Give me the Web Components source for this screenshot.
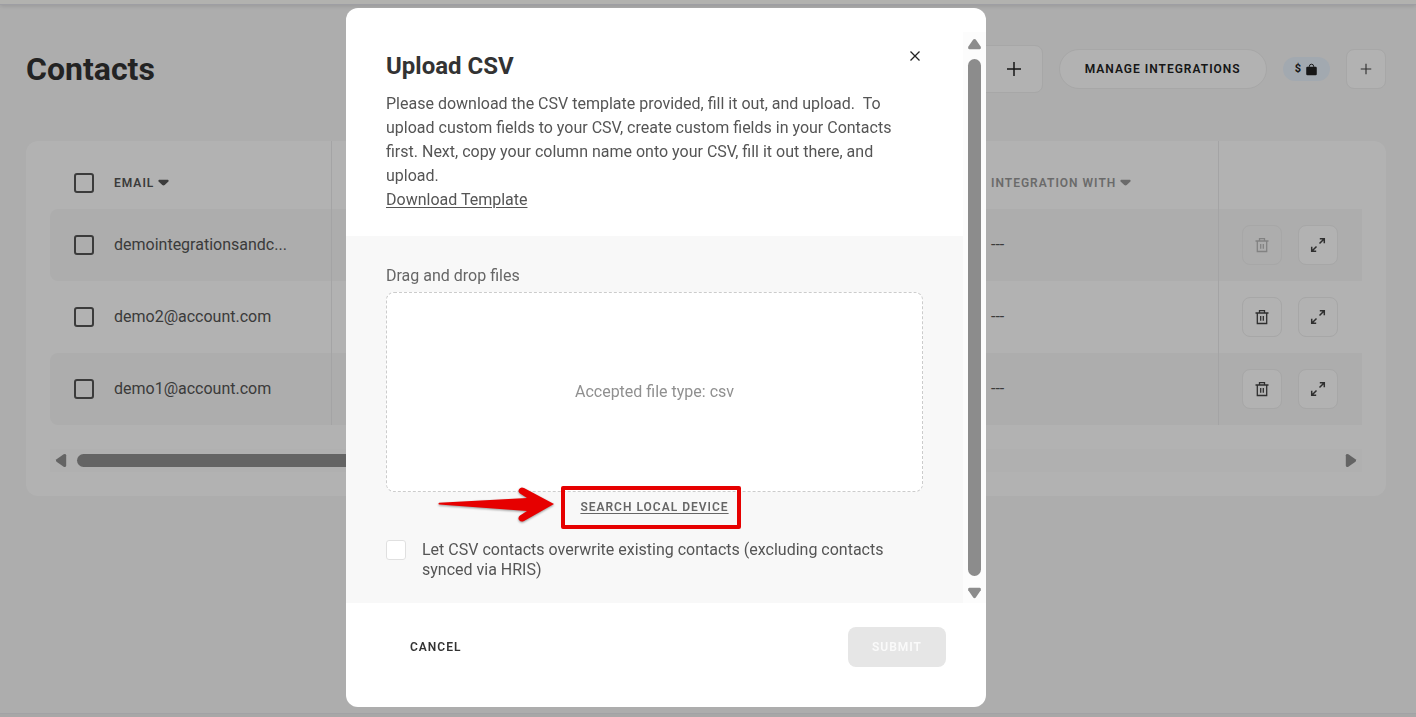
<!DOCTYPE html>
<html lang="en">
<head>
<meta charset="utf-8">
<title>Contacts</title>
<style>
html, body { margin: 0; height: 100%; }
body { background: #f8f8f8; color: #555; font: 16px/24px Roboto, "Liberation Sans", sans-serif; }
</style>
</head>
<body>
<contacts-page>
  <page-header slot="header" heading="Contacts"></page-header>
  <contacts-table></contacts-table>
</contacts-page>
<upload-dialog></upload-dialog>

<script>
const define = (name, markup) => {
  customElements.define(name, class extends HTMLElement {
    constructor() {
      super();
      this.attachShadow({ mode: 'open' });
    }
    connectedCallback() {
      this.shadowRoot.innerHTML = markup(this);
    }
  });
};

const icons = {
  plus: '<path d="M8 1v14M1 8h14" fill="none" stroke="currentColor" stroke-width="1.5"/>',
  close: '<path d="M3.5 3.5l9 9M12.5 3.5l-9 9" fill="none" stroke="currentColor" stroke-width="1.3"/>',
  trash: '<path d="M1.5 4h13M5.5 4V1.700h5V4M3.300 4v10.500h9.400V4M6.700 7v4.700M9.300 7v4.700" fill="none" stroke="currentColor" stroke-width="1.300"/>',
  expand: '<path d="M9.500 6.500L14 2M9.800 1.700h4.500v4.500M6.500 9.500L2 14M1.700 9.800v4.500h4.500" fill="none" stroke="currentColor" stroke-width="1.500"/>',
  bag: '<path d="M5.300 6V4.200a2.700 2.700 0 0 1 5.400 0V6" fill="none" stroke="currentColor" stroke-width="1.200"/><rect x="1.500" y="4.500" width="13" height="10.500" rx="1.500" fill="currentColor"/>',
  caret: '<path d="M2.500 4.500h11q1.500 1 .5 2.200L9.500 11q-1.500 1.200-3 0L2 6.700q-1-1.200.5-2.200z" fill="currentColor"/>',
  up: '<path d="M6.600 2.700Q8 1.300 9.400 2.700L14.700 10.300Q15.500 12.800 13.500 13H2.500Q.5 12.800 1.300 10.300z" fill="currentColor"/>'
};

define('ui-icon', el => `
  <style>
    :host { display: inline-flex; width: var(--icon-size, 16px); height: var(--icon-size, 16px); flex: none; }
    svg { width: 100%; height: 100%; display: block; }
  </style>
  <svg viewBox="0 0 16 16" aria-hidden="true">${icons[el.getAttribute('name')]}</svg>`);

define('icon-button', el => `
  <style>
    :host { display: inline-flex; }
    button { width: 40px; height: 40px; padding: 0; border: 1px solid #efefef; border-radius: 8px;
      background: #fff; color: #444; display: flex; align-items: center; justify-content: center; }
    button:disabled { background: transparent; color: #bbb; }
  </style>
  <button type="button" aria-label="${el.getAttribute('label')}" ${el.hasAttribute('disabled') ? 'disabled' : ''}>
    <ui-icon name="${el.getAttribute('icon')}"></ui-icon>
  </button>`);

define('contacts-page', () => `
  <style>
    :host { display: flex; flex-direction: column; min-height: 100vh; }
    .top { height: 4px; background: #fffffb; border-bottom: 1px solid #e2e2ea; box-shadow: 0 1px 4px #0002; }
    main { flex: 1; padding: 40px 30px 0 26px; }
    .bottom { height: 3px; background: #f0f0f0; border-top: 1px solid #e9e9ec; }
  </style>
  <div class="top"></div>
  <main><slot name="header"></slot><slot></slot></main>
  <div class="bottom"></div>`);

define('page-header', el => `
  <style>
    :host { display: flex; align-items: center; gap: 16px; height: 48px; margin-bottom: 48px; }
    h1 { flex: 1; margin: 0; color: #333; font-size: 32px; line-height: 40px; font-weight: 700; }
    .add { width: 280px; height: 48px; padding: 0 20px; border: 1px solid #efefef; border-radius: 8px; background: #fff;
      color: #222; display: flex; align-items: center; justify-content: flex-end; }
    .manage { height: 40px; padding: 0 25px; border: 1px solid #efefef; border-radius: 20px; background: #fff;
      color: #222; font: 600 12px/16px Roboto, "Liberation Sans", sans-serif; letter-spacing: 1px; }
    .pill { display: flex; align-items: center; gap: 4px; height: 24px; padding: 0 12px; border-radius: 12px; background: #e9f2fc;
      color: #222; font-size: 11px; line-height: 24px; font-weight: 700; }
    .pill ui-icon { --icon-size: 13px; }
  </style>
  <h1>${el.getAttribute('heading')}</h1>
  <button class="add" type="button" aria-label="Add filter"><ui-icon name="plus"></ui-icon></button>
  <button class="manage" type="button">MANAGE INTEGRATIONS</button>
  <span class="pill">$<ui-icon name="bag"></ui-icon></span>
  <icon-button icon="plus" label="Add contact" style="--icon-size:12px"></icon-button>`);

define('contacts-table', () => {
  const rows = ['demointegrationsandc...', 'demo2@account.com', 'demo1@account.com'];
  return `
  <style>
    :host { display: block; padding: 0 24px 24px; border-radius: 12px; background: #fff; }
    table { width: 100%; table-layout: fixed; border-collapse: separate; border-spacing: 0; }
    th, td { padding: 0 24px; text-align: left; box-sizing: border-box; }
    th { height: 68px; padding-top: 15px; font-size: 12px; line-height: 16px; font-weight: 600; letter-spacing: 1px; }
    td { height: 72px; }
    .email { width: 282px; border-right: 1px solid #ebebed; }
    .integration { width: 251px; }
    th.integration { color: #999; }
    .actions { width: 144px; padding: 0 23px; border-left: 1px solid #ebebed; }
    tbody tr:nth-child(odd) td { background: #f8f8f8; }
    tbody td:first-child { border-radius: 8px 0 0 8px; }
    .line { display: flex; align-items: center; gap: 20px; }
    .sort { display: inline-flex; align-items: center; gap: 3px; }
    .sort ui-icon { --icon-size: 13px; }
    .buttons { display: flex; gap: 16px; }
    input { appearance: none; flex: none; box-sizing: border-box; width: 20px; height: 20px; margin: 0; border: 2px solid #555; border-radius: 3px; }
    .scroll { display: flex; align-items: center; justify-content: space-between; height: 23px; margin-top: 24px; padding: 0 4px; background: #fcfcfc; color: #909090; }
    .scroll ui-icon { --icon-size: 15px; transform: rotate(-90deg); }
    .scroll ui-icon:last-child { transform: rotate(90deg); }
    .track { flex: 1; padding: 0 8px; }
    .thumb { width: 60%; height: 13px; border-radius: 7px; background: #909090; }
  </style>
  <table>
    <thead><tr>
      <th class="email"><span class="line"><input type="checkbox" aria-label="Select all contacts"><span class="sort">EMAIL<ui-icon name="caret"></ui-icon></span></span></th>
      <th></th>
      <th class="integration"><span class="sort">INTEGRATION WITH<ui-icon name="caret"></ui-icon></span></th>
      <th class="actions"></th>
    </tr></thead>
    <tbody>${rows.map((email, i) => `<tr>
      <td class="email"><label class="line"><input type="checkbox"><span>${email}</span></label></td>
      <td></td>
      <td class="integration">---</td>
      <td class="actions"><div class="buttons"><icon-button icon="trash" label="Delete" ${i ? '' : 'disabled'}></icon-button><icon-button icon="expand" label="Open"></icon-button></div></td>
    </tr>`).join('')}</tbody>
  </table>
  <div class="scroll" aria-hidden="true"><ui-icon name="up"></ui-icon><div class="track"><div class="thumb"></div></div><ui-icon name="up"></ui-icon></div>`;
});

define('call-out', () => `
  <style>
    :host { position: relative; display: inline-flex; }
    .frame { position: absolute; inset: -13px -12px -14px -19px; border: 4px solid #e60000; border-radius: 2px; pointer-events: none; }
    svg { position: absolute; right: calc(100% + 25px); top: -14px; width: 120px; height: 38px; filter: drop-shadow(0 1px 1px #0006); pointer-events: none; }
  </style>
  <slot></slot>
  <span class="frame"></span>
  <svg viewBox="0 0 120 38" aria-hidden="true"><path d="M4 17.700Q3 19 4 19.600L92 26L85 30.500Q82.500 32.500 84 35Q86 37.500 89 36L119 19L89 3Q86 1.500 84.200 4Q82.500 6.500 85 8.500L92 13z" fill="#e60000"/></svg>`);

define('drop-zone', () => `
  <style>
    :host { display: flex; align-items: center; justify-content: center; box-sizing: border-box; height: 200px;
      border: 1px dashed #ccc; border-radius: 8px; background: #fff; color: #909090; }
  </style>
  <slot></slot>`);

define('upload-dialog', () => `
  <style>
    :host { position: fixed; inset: 0; box-sizing: border-box; padding: 8px 84px 10px 0; background: rgb(0 0 0 / .3);
      display: flex; justify-content: center; align-items: flex-start; }
    .dialog { width: 640px; max-width: 100%; box-sizing: border-box; padding-top: 24px; border-radius: 12px; background: #fff; }
    .view { display: flex; }
    .content { flex: 1; min-width: 0; }
    .intro { padding: 16px 40px 24px; }
    .title { display: flex; justify-content: space-between; align-items: flex-start; height: 44px; }
    h2 { margin: 0; padding-top: 2px; color: #333; font-size: 24px; line-height: 32px; font-weight: 700; }
    .title button { width: 16px; height: 16px; padding: 0; border: 0; background: none; color: #222; }
    p { margin: 0; }
    a { color: inherit; text-underline-offset: 2px; }
    .upload { padding: 28px 40px 23px; background: #f8f8f8; }
    .upload p { margin-bottom: 4px; color: #666; }
    .search { display: flex; justify-content: center; margin: 7px 0 25px; line-height: 16px; }
    .search a { color: #666; font-size: 12px; font-weight: 600; letter-spacing: 1px; }
    .option { display: flex; gap: 16px; line-height: 20px; }
    .option input { appearance: none; flex: none; box-sizing: border-box; width: 20px; height: 20px; margin: 0; border: 1px solid #e0e0e0; border-radius: 3px; background: #fff; }
    .bar { display: flex; flex-direction: column; align-items: center; width: 23px; box-sizing: border-box; padding: 5px 0 3px; background: #fcfcfc; color: #8c8c8c; }
    .bar ui-icon { --icon-size: 15px; }
    .bar ui-icon:last-child { transform: rotate(180deg); }
    .thumb { flex: 1; width: 13px; margin: 7px 0 9px; border-radius: 7px; background: #8c8c8c; }
    footer { display: flex; justify-content: space-between; padding: 24px 40px 40px; }
    footer button { height: 40px; padding: 0 24px; border: 0; border-radius: 8px; background: none; color: #333;
      font: 600 12px/16px Roboto, "Liberation Sans", sans-serif; letter-spacing: 1px; }
    footer button:disabled { background: #e6e6e6; color: #fafafa; }
  </style>
  <div class="dialog" role="dialog" aria-modal="true" aria-labelledby="title">
    <div class="view">
      <div class="content">
        <section class="intro">
          <div class="title"><h2 id="title">Upload CSV</h2><button type="button" aria-label="Close"><ui-icon name="close"></ui-icon></button></div>
          <p>Please download the CSV template provided, fill it out, and upload.&nbsp; To upload custom fields to your CSV, create custom fields in your Contacts first. Next, copy your column name onto your CSV, fill it out there, and upload.</p>
          <a href="#template">Download Template</a>
        </section>
        <section class="upload">
          <p>Drag and drop files</p>
          <drop-zone>Accepted file type: csv</drop-zone>
          <div class="search"><call-out><a href="#search">SEARCH LOCAL DEVICE</a></call-out></div>
          <label class="option"><input type="checkbox"><span>Let CSV contacts overwrite existing contacts (excluding contacts synced via HRIS)</span></label>
        </section>
      </div>
      <div class="bar" aria-hidden="true"><ui-icon name="up"></ui-icon><div class="thumb"></div><ui-icon name="up"></ui-icon></div>
    </div>
    <footer><button type="button">CANCEL</button><button type="button" disabled>SUBMIT</button></footer>
  </div>`);
</script>
</body>
</html>
